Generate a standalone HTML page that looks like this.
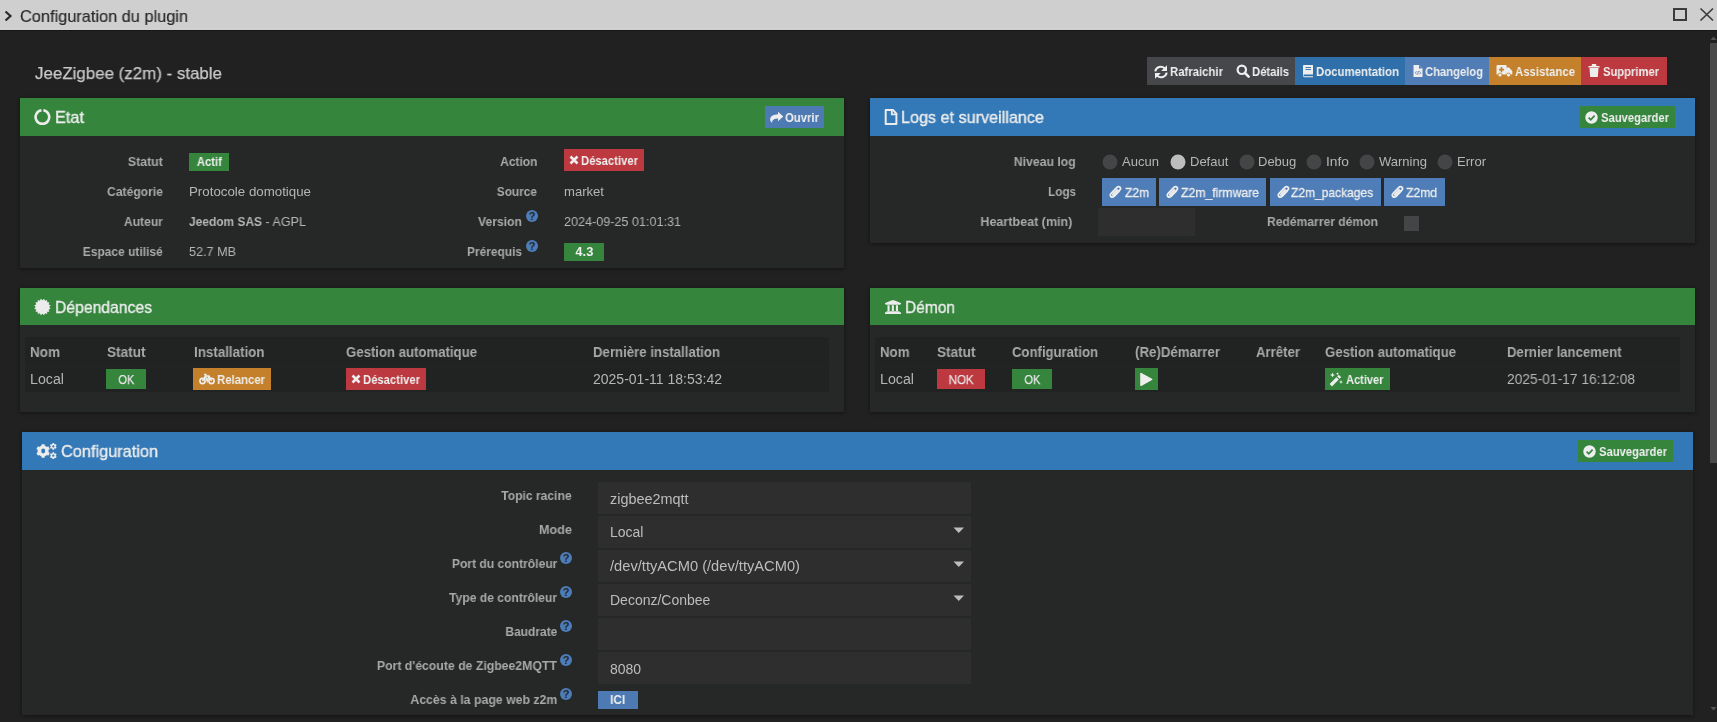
<!DOCTYPE html>
<html><head><meta charset="utf-8"><style>
html,body{margin:0;padding:0;width:1717px;height:722px;overflow:hidden;background:#202020;font-family:"Liberation Sans",sans-serif;}
body>div{position:absolute;}
.t{position:absolute;white-space:pre;will-change:transform;}
</style></head><body>
<div style="left:0px;top:0px;width:1717px;height:722px;background:#212121;"></div>
<div style="left:0px;top:0px;width:1717px;height:30px;background:#cfcfcf;"></div>
<div style="left:0px;top:30px;width:1717px;height:1px;background:#161616;"></div>
<svg style="position:absolute;left:3px;top:10px;" width="10" height="12" viewBox="0 0 10 12"><path d="M2.5 1.5 L7.5 6 L2.5 10.5" fill="none" stroke="#2a2a2a" stroke-width="2.2"/></svg>
<span class="t" style="left:19.60px;top:7.61px;font-size:17px;line-height:17px;color:#2b2b2b;transform:scaleX(0.9608);transform-origin:left center;-webkit-text-stroke:0.2px #2b2b2b;">Configuration du plugin</span>
<svg style="position:absolute;left:1672px;top:7px;" width="16" height="15" viewBox="0 0 16 15"><rect x="2" y="2" width="12" height="11" fill="none" stroke="#3c3c3c" stroke-width="2"/></svg>
<svg style="position:absolute;left:1699px;top:7px;" width="16" height="15" viewBox="0 0 16 15"><path d="M1.5 1.5 L14 13.5 M14 1.5 L1.5 13.5" fill="none" stroke="#3c3c3c" stroke-width="1.7"/></svg>
<div style="left:1710px;top:43px;width:7px;height:420px;background:#4a4a4a;"></div>
<svg style="position:absolute;left:1710px;top:35px;" width="7" height="6" viewBox="0 0 7 6"><path d="M0.5 5 L3.5 1.5 L6.5 5Z" fill="#555"/></svg>
<svg style="position:absolute;left:1710px;top:706px;" width="7" height="6" viewBox="0 0 7 6"><path d="M0.5 1 L3.5 4.5 L6.5 1Z" fill="#555"/></svg>
<span class="t" style="left:35.00px;top:64.61px;font-size:17px;line-height:17px;color:#c9c9c9;transform:scaleX(0.9945);transform-origin:left center;-webkit-text-stroke:0.25px #c9c9c9;">JeeZigbee (z2m) - stable</span>
<div style="left:1147px;top:57px;width:148px;height:28px;background:#45474a;"></div>
<div style="left:1295px;top:57px;width:110px;height:28px;background:#3070aa;"></div>
<div style="left:1405px;top:57px;width:84px;height:28px;background:#517db6;"></div>
<div style="left:1489px;top:57px;width:92px;height:28px;background:#c4802a;"></div>
<div style="left:1581px;top:57px;width:86px;height:28px;background:#bc393f;"></div>
<span class="t" style="left:1170.00px;top:65.00px;font-size:13px;line-height:13px;font-weight:700;color:#eeeeee;transform:scaleX(0.8731);transform-origin:left center;">Rafraichir</span>
<span class="t" style="left:1252.00px;top:65.00px;font-size:13px;line-height:13px;font-weight:700;color:#eeeeee;transform:scaleX(0.8677);transform-origin:left center;">Détails</span>
<span class="t" style="left:1316.00px;top:65.00px;font-size:13px;line-height:13px;font-weight:700;color:#eeeeee;transform:scaleX(0.8771);transform-origin:left center;">Documentation</span>
<span class="t" style="left:1425.00px;top:65.00px;font-size:13px;line-height:13px;font-weight:700;color:#eeeeee;transform:scaleX(0.8635);transform-origin:left center;">Changelog</span>
<span class="t" style="left:1515.00px;top:65.00px;font-size:13px;line-height:13px;font-weight:700;color:#eeeeee;transform:scaleX(0.8739);transform-origin:left center;">Assistance</span>
<span class="t" style="left:1603.00px;top:65.00px;font-size:13px;line-height:13px;font-weight:700;color:#eeeeee;transform:scaleX(0.8613);transform-origin:left center;">Supprimer</span>
<svg style="position:absolute;left:1154px;top:65px;" width="14" height="14" viewBox="0 0 14 14"><path d="M1.3 6.4 A5.6 5.6 0 0 1 10.6 3.3" fill="none" stroke="#eee" stroke-width="2.1"/><path d="M13 0.3 L13 6.1 L7.2 6.1Z" fill="#eee"/><path d="M12.7 7.6 A5.6 5.6 0 0 1 3.4 10.7" fill="none" stroke="#eee" stroke-width="2.1"/><path d="M1 13.7 L1 7.9 L6.8 7.9Z" fill="#eee"/></svg>
<svg style="position:absolute;left:1236px;top:64px;" width="14" height="14" viewBox="0 0 14 14"><circle cx="5.8" cy="5.8" r="4.2" fill="none" stroke="#eee" stroke-width="2.2"/><path d="M9 9 L12.6 12.6" stroke="#eee" stroke-width="2.6" stroke-linecap="round"/></svg>
<svg style="position:absolute;left:1302px;top:64px;" width="12" height="14" viewBox="0 0 12 14"><path d="M1 2 Q1 1 2 1 L11 1 L11 10.5 L2.5 10.5 Q1.5 10.5 1.5 11.5 Q1.5 12.3 2.5 12.3 L11 12.3 L11 13.2 L2.3 13.2 Q1 13.2 1 11.8Z" fill="#eee"/><path d="M3.5 3.5 H9 M3.5 5.5 H9" stroke="#3070aa" stroke-width="0.9"/></svg>
<svg style="position:absolute;left:1413px;top:64px;" width="10" height="14" viewBox="0 0 10 14"><path d="M0.5 1 L6 1 L9.5 4.5 L9.5 13 L0.5 13Z" fill="#eee"/><path d="M6 1 L6 4.5 L9.5 4.5" fill="#517db6"/><path d="M3.6 7.2 L2.4 8.8 L3.6 10.4 M6.4 7.2 L7.6 8.8 L6.4 10.4 M5.5 7 L4.5 10.6" fill="none" stroke="#517db6" stroke-width="0.8"/></svg>
<svg style="position:absolute;left:1496px;top:64px;" width="17" height="13" viewBox="0 0 17 13"><path d="M0.5 2 Q0.5 1 1.5 1 L10.5 1 L10.5 3.5 L13 3.5 L16.3 7 L16.3 10.5 L0.5 10.5Z" fill="#eee"/><circle cx="4" cy="11" r="2" fill="#eee" stroke="#c4802a" stroke-width="0.8"/><circle cx="12.5" cy="11" r="2" fill="#eee" stroke="#c4802a" stroke-width="0.8"/><path d="M5.5 3 V8.2 M2.9 5.6 H8.1" stroke="#c4802a" stroke-width="1.6"/></svg>
<svg style="position:absolute;left:1588px;top:63px;" width="12" height="15" viewBox="0 0 12 15"><path d="M0.5 3 L11.5 3 L11.5 4.5 L0.5 4.5Z M4 1 L8 1 L8.5 3 L3.5 3Z M1.5 5 L10.5 5 L9.8 14 L2.2 14Z" fill="#eee"/></svg>
<div style="left:20px;top:98px;width:824px;height:170px;background:#262828;box-shadow:0 1px 4px rgba(0,0,0,0.45);"></div>
<div style="left:20px;top:98px;width:824px;height:38px;background:#35853d;"></div>
<div style="left:870px;top:98px;width:825px;height:145px;background:#262828;box-shadow:0 1px 4px rgba(0,0,0,0.45);"></div>
<div style="left:870px;top:98px;width:825px;height:38px;background:#3479b7;"></div>
<div style="left:20px;top:288px;width:824px;height:124px;background:#262828;box-shadow:0 1px 4px rgba(0,0,0,0.45);"></div>
<div style="left:20px;top:288px;width:824px;height:37px;background:#35853d;"></div>
<div style="left:870px;top:288px;width:825px;height:124px;background:#262828;box-shadow:0 1px 4px rgba(0,0,0,0.45);"></div>
<div style="left:870px;top:288px;width:825px;height:37px;background:#35853d;"></div>
<div style="left:22px;top:432px;width:1671px;height:283px;background:#262828;box-shadow:0 1px 4px rgba(0,0,0,0.45);"></div>
<div style="left:22px;top:432px;width:1671px;height:38px;background:#3479b7;"></div>
<span class="t" style="left:55.00px;top:108.61px;font-size:17px;line-height:17px;color:#ececec;transform:scaleX(0.9587);transform-origin:left center;-webkit-text-stroke:0.35px #ececec;">Etat</span>
<span class="t" style="left:901.00px;top:108.61px;font-size:17px;line-height:17px;color:#ececec;transform:scaleX(0.9516);transform-origin:left center;-webkit-text-stroke:0.35px #ececec;">Logs et surveillance</span>
<span class="t" style="left:55.00px;top:298.61px;font-size:17px;line-height:17px;color:#ececec;transform:scaleX(0.9245);transform-origin:left center;-webkit-text-stroke:0.35px #ececec;">Dépendances</span>
<span class="t" style="left:905.00px;top:298.61px;font-size:17px;line-height:17px;color:#ececec;transform:scaleX(0.9122);transform-origin:left center;-webkit-text-stroke:0.35px #ececec;">Démon</span>
<span class="t" style="left:61.00px;top:442.61px;font-size:17px;line-height:17px;color:#ececec;transform:scaleX(0.9592);transform-origin:left center;-webkit-text-stroke:0.35px #ececec;">Configuration</span>
<svg style="position:absolute;left:34px;top:108px;" width="17" height="18" viewBox="0 0 17 18"><path d="M9.35 2.27 A6.8 6.8 0 1 1 7.45 2.27" fill="none" stroke="#ececec" stroke-width="2.6"/></svg>
<svg style="position:absolute;left:884px;top:109px;" width="14" height="16" viewBox="0 0 14 16"><path d="M1.7 1 L9 1 L12.4 4.6 L12.4 15 L1.7 15Z" fill="none" stroke="#ececec" stroke-width="2" stroke-linejoin="round"/><path d="M7.8 1.5 L7.8 5.3 L11.9 5.3" fill="none" stroke="#ececec" stroke-width="1.8"/></svg>
<svg style="position:absolute;left:34px;top:298px;" width="17" height="18" viewBox="0 0 17 18"><polygon points="10.09,0.76 11.01,2.81 13.12,2.02 13.19,4.26 15.43,4.33 14.64,6.44 16.69,7.36 15.15,9.00 16.69,10.64 14.64,11.56 15.43,13.67 13.19,13.74 13.12,15.98 11.01,15.19 10.09,17.24 8.45,15.70 6.81,17.24 5.89,15.19 3.78,15.98 3.71,13.74 1.47,13.67 2.26,11.56 0.21,10.64 1.75,9.00 0.21,7.36 2.26,6.44 1.47,4.33 3.71,4.26 3.78,2.02 5.89,2.81 6.81,0.76 8.45,2.30" fill="#ececec"/></svg>
<svg style="position:absolute;left:885px;top:300px;" width="16" height="14" viewBox="0 0 16 14"><path d="M0 3.5 Q0 3 0.8 2.7 L7 0.3 Q8 0 9 0.3 L15.2 2.7 Q16 3 16 3.5 L16 4 Q15.5 4.8 14.5 4.8 L1.5 4.8 Q0.5 4.8 0 4Z M1.5 11.2 H14.5 V12.3 H16 V14 H0 V12.3 H1.5Z M2.5 5.2 H4.6 V11 H2.5Z M6.8 5.2 H8.9 V11 H6.8Z M10.9 5.2 H13 V11 H10.9Z" fill="#ececec"/></svg>
<svg style="position:absolute;left:35px;top:443px;" width="23" height="17" viewBox="0 0 23 17"><polygon points="6.54,2.62 6.57,1.17 9.63,1.17 9.66,2.62 11.98,3.96 13.25,3.26 14.78,5.91 13.54,6.66 13.54,9.34 14.78,10.09 13.25,12.74 11.98,12.04 9.66,13.38 9.63,14.83 6.57,14.83 6.54,13.38 4.22,12.04 2.95,12.74 1.42,10.09 2.66,9.34 2.66,6.66 1.42,5.91 2.95,3.26 4.22,3.96" fill="#ececec"/><ellipse cx="8.2" cy="8" rx="2" ry="2.4" fill="#3479b7"/><polygon points="17.47,0.94 17.39,0.02 19.21,0.02 19.13,0.94 20.02,1.45 20.77,0.93 21.68,2.49 20.85,2.89 20.85,3.91 21.68,4.31 20.77,5.87 20.02,5.35 19.13,5.86 19.21,6.78 17.39,6.78 17.47,5.86 16.58,5.35 15.83,5.87 14.92,4.31 15.75,3.91 15.75,2.89 14.92,2.49 15.83,0.93 16.58,1.45" fill="#ececec"/><circle cx="18.3" cy="3.4" r="1.1" fill="#3479b7"/><polygon points="17.47,10.24 17.39,9.32 19.21,9.32 19.13,10.24 20.02,10.75 20.77,10.23 21.68,11.79 20.85,12.19 20.85,13.21 21.68,13.61 20.77,15.17 20.02,14.65 19.13,15.16 19.21,16.08 17.39,16.08 17.47,15.16 16.58,14.65 15.83,15.17 14.92,13.61 15.75,13.21 15.75,12.19 14.92,11.79 15.83,10.23 16.58,10.75" fill="#ececec"/><circle cx="18.3" cy="12.7" r="1.1" fill="#3479b7"/></svg>
<span class="t" style="left:126.16px;top:155.00px;font-size:13px;line-height:13px;font-weight:700;color:#a9a9a9;transform:scaleX(0.9500);transform-origin:right center;">Statut</span>
<span class="t" style="left:103.03px;top:185.00px;font-size:13px;line-height:13px;font-weight:700;color:#a9a9a9;transform:scaleX(0.9338);transform-origin:right center;">Catégorie</span>
<span class="t" style="left:121.11px;top:215.00px;font-size:13px;line-height:13px;font-weight:700;color:#a9a9a9;transform:scaleX(0.9310);transform-origin:right center;">Auteur</span>
<span class="t" style="left:76.28px;top:245.00px;font-size:13px;line-height:13px;font-weight:700;color:#a9a9a9;transform:scaleX(0.9225);transform-origin:right center;">Espace utilisé</span>
<div style="left:189px;top:153px;width:40px;height:18px;background:#35853d;"></div>
<span class="t" style="left:195.66px;top:155.84px;font-size:12px;line-height:12px;font-weight:700;color:#f0f0f0;transform:scaleX(0.9373);transform-origin:center center;">Actif</span>
<span class="t" style="left:189.00px;top:185.00px;font-size:13px;line-height:13px;color:#b5b5b5;transform:scaleX(1.0231);transform-origin:left center;">Protocole domotique</span>
<span class="t" style="left:189.00px;top:215.00px;font-size:13px;line-height:13px;font-weight:700;color:#b5b5b5;transform:scaleX(0.9184);transform-origin:left center;">Jeedom SAS</span>
<span class="t" style="left:262.00px;top:215.00px;font-size:13px;line-height:13px;color:#b5b5b5;transform:scaleX(0.9664);transform-origin:left center;"> - AGPL</span>
<span class="t" style="left:189.00px;top:245.00px;font-size:13px;line-height:13px;color:#b5b5b5;transform:scaleX(0.9706);transform-origin:left center;">52.7 MB</span>
<span class="t" style="left:496.55px;top:155.00px;font-size:13px;line-height:13px;font-weight:700;color:#a9a9a9;transform:scaleX(0.9221);transform-origin:right center;">Action</span>
<span class="t" style="left:492.92px;top:185.00px;font-size:13px;line-height:13px;font-weight:700;color:#a9a9a9;transform:scaleX(0.9143);transform-origin:right center;">Source</span>
<span class="t" style="left:475.03px;top:215.00px;font-size:13px;line-height:13px;font-weight:700;color:#a9a9a9;transform:scaleX(0.9368);transform-origin:right center;">Version</span>
<span class="t" style="left:462.02px;top:245.00px;font-size:13px;line-height:13px;font-weight:700;color:#a9a9a9;transform:scaleX(0.9169);transform-origin:right center;">Prérequis</span>
<svg style="position:absolute;left:526px;top:210px;" width="12" height="12" viewBox="0 0 12 12"><circle cx="6" cy="6" r="6" fill="#4d7db8"/><text x="6" y="10.2" text-anchor="middle" font-family="Liberation Sans" font-weight="700" font-size="11" fill="#262828">?</text></svg>
<svg style="position:absolute;left:526px;top:240px;" width="12" height="12" viewBox="0 0 12 12"><circle cx="6" cy="6" r="6" fill="#4d7db8"/><text x="6" y="10.2" text-anchor="middle" font-family="Liberation Sans" font-weight="700" font-size="11" fill="#262828">?</text></svg>
<div style="left:564px;top:149px;width:80px;height:22px;background:#bc393f;"></div>
<svg style="position:absolute;left:568px;top:154px;" width="12" height="12" viewBox="0 0 12 12"><path d="M2.5 2.5 L9.5 9.5 M9.5 2.5 L2.5 9.5" stroke="#eee" stroke-width="2.6"/></svg>
<span class="t" style="left:581.00px;top:154.20px;font-size:13px;line-height:13px;font-weight:700;color:#eeeeee;transform:scaleX(0.8665);transform-origin:left center;">Désactiver</span>
<span class="t" style="left:563.50px;top:185.00px;font-size:13px;line-height:13px;color:#b5b5b5;transform:scaleX(1.0067);transform-origin:left center;">market</span>
<span class="t" style="left:563.50px;top:215.00px;font-size:13px;line-height:13px;color:#b5b5b5;transform:scaleX(0.9692);transform-origin:left center;">2024-09-25 01:01:31</span>
<div style="left:564px;top:243px;width:40px;height:18px;background:#35853d;"></div>
<span class="t" style="left:575.66px;top:245.84px;font-size:12px;line-height:12px;font-weight:700;color:#f0f0f0;transform:scaleX(1.0787);transform-origin:center center;">4.3</span>
<div style="left:765px;top:106px;width:59px;height:22px;background:#4e7ab3;"></div>
<svg style="position:absolute;left:769px;top:110px;" width="15" height="14" viewBox="0 0 15 14"><path d="M9 1.8 L14.3 6.5 L9 11.2 L9 8.6 Q5 8.4 3.6 10.4 Q2.7 11.8 3.3 13 Q0.7 11.6 1.2 8.6 Q2 4.6 9 4.3Z" fill="#eee"/></svg>
<span class="t" style="left:785.00px;top:111.00px;font-size:13px;line-height:13px;font-weight:700;color:#eeeeee;transform:scaleX(0.8714);transform-origin:left center;">Ouvrir</span>
<span class="t" style="left:1010.25px;top:155.00px;font-size:13px;line-height:13px;font-weight:700;color:#a9a9a9;transform:scaleX(0.9430);transform-origin:right center;">Niveau log</span>
<span class="t" style="left:1044.94px;top:185.00px;font-size:13px;line-height:13px;font-weight:700;color:#a9a9a9;transform:scaleX(0.9014);transform-origin:right center;">Logs</span>
<span class="t" style="left:976.64px;top:215.00px;font-size:13px;line-height:13px;font-weight:700;color:#a9a9a9;transform:scaleX(0.9648);transform-origin:right center;">Heartbeat (min)</span>
<svg style="position:absolute;left:1101.5px;top:154px;" width="16" height="16" viewBox="0 0 16 16"><circle cx="8" cy="8" r="7.5" fill="#444546"/></svg>
<span class="t" style="left:1122.00px;top:155.00px;font-size:13px;line-height:13px;color:#b5b5b5;transform:scaleX(1.0034);transform-origin:left center;">Aucun</span>
<svg style="position:absolute;left:1169.5px;top:154px;" width="16" height="16" viewBox="0 0 16 16"><circle cx="8" cy="8" r="7.5" fill="#bdbdbd"/></svg>
<span class="t" style="left:1190.00px;top:155.00px;font-size:13px;line-height:13px;color:#b5b5b5;transform:scaleX(0.9918);transform-origin:left center;">Defaut</span>
<svg style="position:absolute;left:1238.5px;top:154px;" width="16" height="16" viewBox="0 0 16 16"><circle cx="8" cy="8" r="7.5" fill="#444546"/></svg>
<span class="t" style="left:1258.00px;top:155.00px;font-size:13px;line-height:13px;color:#b5b5b5;transform:scaleX(0.9918);transform-origin:left center;">Debug</span>
<svg style="position:absolute;left:1305.5px;top:154px;" width="16" height="16" viewBox="0 0 16 16"><circle cx="8" cy="8" r="7.5" fill="#444546"/></svg>
<span class="t" style="left:1326.00px;top:155.00px;font-size:13px;line-height:13px;color:#b5b5b5;transform:scaleX(1.0605);transform-origin:left center;">Info</span>
<svg style="position:absolute;left:1358.5px;top:154px;" width="16" height="16" viewBox="0 0 16 16"><circle cx="8" cy="8" r="7.5" fill="#444546"/></svg>
<span class="t" style="left:1379.00px;top:155.00px;font-size:13px;line-height:13px;color:#b5b5b5;">Warning</span>
<svg style="position:absolute;left:1436.5px;top:154px;" width="16" height="16" viewBox="0 0 16 16"><circle cx="8" cy="8" r="7.5" fill="#444546"/></svg>
<span class="t" style="left:1457.00px;top:155.00px;font-size:13px;line-height:13px;color:#b5b5b5;transform:scaleX(1.0038);transform-origin:left center;">Error</span>
<div style="left:1102px;top:178px;width:54px;height:28px;background:#4e7db7;"></div>
<svg style="position:absolute;left:1109px;top:185px;" width="13" height="14" viewBox="0 0 13 14"><path d="M10.6 5.6 L5.6 10.8 Q3.4 13 1.9 11.5 Q0.4 10 2.6 7.8 L7.9 2.4 Q9.5 0.8 10.9 2.2 Q12.3 3.6 10.7 5.2 L5.7 10.2 Q4.9 11 4.2 10.3 Q3.5 9.6 4.3 8.8 L8.8 4.3" fill="none" stroke="#eee" stroke-width="1.8"/></svg>
<span class="t" style="left:1125.00px;top:186.00px;font-size:13px;line-height:13px;color:#eeeeee;transform:scaleX(0.9231);transform-origin:left center;-webkit-text-stroke:0.3px #eeeeee;">Z2m</span>
<div style="left:1159px;top:178px;width:107px;height:28px;background:#4e7db7;"></div>
<svg style="position:absolute;left:1166px;top:185px;" width="13" height="14" viewBox="0 0 13 14"><path d="M10.6 5.6 L5.6 10.8 Q3.4 13 1.9 11.5 Q0.4 10 2.6 7.8 L7.9 2.4 Q9.5 0.8 10.9 2.2 Q12.3 3.6 10.7 5.2 L5.7 10.2 Q4.9 11 4.2 10.3 Q3.5 9.6 4.3 8.8 L8.8 4.3" fill="none" stroke="#eee" stroke-width="1.8"/></svg>
<span class="t" style="left:1181.00px;top:186.00px;font-size:13px;line-height:13px;color:#eeeeee;transform:scaleX(0.9389);transform-origin:left center;-webkit-text-stroke:0.3px #eeeeee;">Z2m_firmware</span>
<div style="left:1270px;top:178px;width:111px;height:28px;background:#4e7db7;"></div>
<svg style="position:absolute;left:1277px;top:185px;" width="13" height="14" viewBox="0 0 13 14"><path d="M10.6 5.6 L5.6 10.8 Q3.4 13 1.9 11.5 Q0.4 10 2.6 7.8 L7.9 2.4 Q9.5 0.8 10.9 2.2 Q12.3 3.6 10.7 5.2 L5.7 10.2 Q4.9 11 4.2 10.3 Q3.5 9.6 4.3 8.8 L8.8 4.3" fill="none" stroke="#eee" stroke-width="1.8"/></svg>
<span class="t" style="left:1291.00px;top:186.00px;font-size:13px;line-height:13px;color:#eeeeee;transform:scaleX(0.9225);transform-origin:left center;-webkit-text-stroke:0.3px #eeeeee;">Z2m_packages</span>
<div style="left:1384px;top:178px;width:61px;height:28px;background:#4e7db7;"></div>
<svg style="position:absolute;left:1391px;top:185px;" width="13" height="14" viewBox="0 0 13 14"><path d="M10.6 5.6 L5.6 10.8 Q3.4 13 1.9 11.5 Q0.4 10 2.6 7.8 L7.9 2.4 Q9.5 0.8 10.9 2.2 Q12.3 3.6 10.7 5.2 L5.7 10.2 Q4.9 11 4.2 10.3 Q3.5 9.6 4.3 8.8 L8.8 4.3" fill="none" stroke="#eee" stroke-width="1.8"/></svg>
<span class="t" style="left:1406.00px;top:186.00px;font-size:13px;line-height:13px;color:#eeeeee;transform:scaleX(0.9328);transform-origin:left center;-webkit-text-stroke:0.3px #eeeeee;">Z2md</span>
<div style="left:1098px;top:208px;width:97px;height:28px;background:#2e2e2e;"></div>
<span class="t" style="left:1267.00px;top:215.00px;font-size:13px;line-height:13px;font-weight:700;color:#a9a9a9;transform:scaleX(0.9311);transform-origin:left center;">Redémarrer démon</span>
<div style="left:1404px;top:216px;width:15px;height:15px;background:#444546;"></div>
<div style="left:25px;top:337px;width:804px;height:55px;background:#212222;"></div>
<div style="left:25px;top:366px;width:804px;height:1px;background:#242525;"></div>
<span class="t" style="left:30.00px;top:345.15px;font-size:14px;line-height:14px;font-weight:700;color:#a9a9a9;transform:scaleX(0.9639);transform-origin:left center;">Nom</span>
<span class="t" style="left:106.50px;top:345.15px;font-size:14px;line-height:14px;font-weight:700;color:#a9a9a9;transform:scaleX(0.9705);transform-origin:left center;">Statut</span>
<span class="t" style="left:193.50px;top:345.15px;font-size:14px;line-height:14px;font-weight:700;color:#a9a9a9;transform:scaleX(0.9539);transform-origin:left center;">Installation</span>
<span class="t" style="left:346.00px;top:345.15px;font-size:14px;line-height:14px;font-weight:700;color:#a9a9a9;transform:scaleX(0.9409);transform-origin:left center;">Gestion automatique</span>
<span class="t" style="left:592.50px;top:345.15px;font-size:14px;line-height:14px;font-weight:700;color:#a9a9a9;transform:scaleX(0.9436);transform-origin:left center;">Dernière installation</span>
<span class="t" style="left:30.00px;top:372.15px;font-size:14px;line-height:14px;color:#b5b5b5;transform:scaleX(1.0159);transform-origin:left center;">Local</span>
<div style="left:106px;top:369px;width:40px;height:20px;background:#35853d;"></div>
<span class="t" style="left:116.60px;top:373.20px;font-size:13px;line-height:13px;color:#e6e6e6;transform:scaleX(0.8512);transform-origin:center center;-webkit-text-stroke:0.25px #e6e6e6;">OK</span>
<div style="left:193px;top:368px;width:78px;height:22px;background:#c4802a;"></div>
<svg style="position:absolute;left:199px;top:373px;" width="16" height="12" viewBox="0 0 16 12"><circle cx="3.5" cy="8" r="2.6" fill="none" stroke="#eee" stroke-width="1.6"/><circle cx="12.5" cy="8" r="2.6" fill="none" stroke="#eee" stroke-width="1.6"/><path d="M3.5 8 L6.5 3 L10 3 L12.5 8 M6.5 3 L8.2 8 L10 3 M5 1.5 H7.5" fill="none" stroke="#eee" stroke-width="1.5"/></svg>
<span class="t" style="left:217.00px;top:373.00px;font-size:13px;line-height:13px;font-weight:700;color:#eeeeee;transform:scaleX(0.8740);transform-origin:left center;">Relancer</span>
<div style="left:346px;top:368px;width:80px;height:22px;background:#bc393f;"></div>
<svg style="position:absolute;left:350px;top:373px;" width="12" height="12" viewBox="0 0 12 12"><path d="M2.5 2.5 L9.5 9.5 M9.5 2.5 L2.5 9.5" stroke="#eee" stroke-width="2.6"/></svg>
<span class="t" style="left:363.00px;top:373.00px;font-size:13px;line-height:13px;font-weight:700;color:#eeeeee;transform:scaleX(0.8665);transform-origin:left center;">Désactiver</span>
<span class="t" style="left:592.50px;top:372.15px;font-size:14px;line-height:14px;color:#b5b5b5;transform:scaleX(0.9964);transform-origin:left center;">2025-01-11 18:53:42</span>
<div style="left:875px;top:337px;width:805px;height:55px;background:#212222;"></div>
<div style="left:875px;top:366px;width:805px;height:1px;background:#242525;"></div>
<span class="t" style="left:880.00px;top:345.15px;font-size:14px;line-height:14px;font-weight:700;color:#a9a9a9;transform:scaleX(0.9478);transform-origin:left center;">Nom</span>
<span class="t" style="left:937.00px;top:345.15px;font-size:14px;line-height:14px;font-weight:700;color:#a9a9a9;transform:scaleX(0.9679);transform-origin:left center;">Statut</span>
<span class="t" style="left:1011.70px;top:345.15px;font-size:14px;line-height:14px;font-weight:700;color:#a9a9a9;transform:scaleX(0.9372);transform-origin:left center;">Configuration</span>
<span class="t" style="left:1135.00px;top:345.15px;font-size:14px;line-height:14px;font-weight:700;color:#a9a9a9;transform:scaleX(0.9499);transform-origin:left center;">(Re)Démarrer</span>
<span class="t" style="left:1256.00px;top:345.15px;font-size:14px;line-height:14px;font-weight:700;color:#a9a9a9;transform:scaleX(0.9421);transform-origin:left center;">Arrêter</span>
<span class="t" style="left:1325.20px;top:345.15px;font-size:14px;line-height:14px;font-weight:700;color:#a9a9a9;transform:scaleX(0.9409);transform-origin:left center;">Gestion automatique</span>
<span class="t" style="left:1507.00px;top:345.15px;font-size:14px;line-height:14px;font-weight:700;color:#a9a9a9;transform:scaleX(0.9372);transform-origin:left center;">Dernier lancement</span>
<span class="t" style="left:880.00px;top:372.15px;font-size:14px;line-height:14px;color:#b5b5b5;transform:scaleX(1.0159);transform-origin:left center;">Local</span>
<div style="left:937px;top:369px;width:48px;height:20px;background:#bc393f;"></div>
<span class="t" style="left:946.91px;top:373.20px;font-size:13px;line-height:13px;color:#e6e6e6;transform:scaleX(0.8874);transform-origin:center center;-webkit-text-stroke:0.25px #e6e6e6;">NOK</span>
<div style="left:1012px;top:369px;width:40px;height:20px;background:#35853d;"></div>
<span class="t" style="left:1022.60px;top:373.20px;font-size:13px;line-height:13px;color:#e6e6e6;transform:scaleX(0.8512);transform-origin:center center;-webkit-text-stroke:0.25px #e6e6e6;">OK</span>
<div style="left:1135px;top:368px;width:23px;height:22px;background:#35853d;"></div>
<svg style="position:absolute;left:1139px;top:372px;" width="15" height="15" viewBox="0 0 15 15"><path d="M2 1.6 L12.6 7.4 L2 13.2Z" fill="#eee" stroke="#eee" stroke-width="1.6" stroke-linejoin="round"/></svg>
<div style="left:1325px;top:368px;width:65px;height:22px;background:#35853d;"></div>
<svg style="position:absolute;left:1329px;top:372px;" width="15" height="15" viewBox="0 0 15 15"><path d="M1.8 13.2 L8.6 6.4" stroke="#eee" stroke-width="3.4"/><path d="M9.4 5.6 L11 4" stroke="#eee" stroke-width="3.4"/><path d="M3.5 0.5 L4.2 2.3 L6 3 L4.2 3.7 L3.5 5.5 L2.8 3.7 L1 3 L2.8 2.3Z M12 8 L12.6 9.4 L14 10 L12.6 10.6 L12 12 L11.4 10.6 L10 10 L11.4 9.4Z M8.5 0.3 L9 1.3 L10 1.8 L9 2.3 L8.5 3.3 L8 2.3 L7 1.8 L8 1.3Z" fill="#eee"/></svg>
<span class="t" style="left:1346.00px;top:373.00px;font-size:13px;line-height:13px;font-weight:700;color:#eeeeee;transform:scaleX(0.8508);transform-origin:left center;">Activer</span>
<span class="t" style="left:1507.00px;top:372.15px;font-size:14px;line-height:14px;color:#b5b5b5;transform:scaleX(0.9846);transform-origin:left center;">2025-01-17 16:12:08</span>
<div style="left:1580px;top:106px;width:95px;height:22px;background:#35853d;"></div>
<svg style="position:absolute;left:1585px;top:111px;" width="13" height="13" viewBox="0 0 13 13"><circle cx="6.5" cy="6.5" r="6.2" fill="#eee"/><path d="M3.6 6.6 L5.8 8.8 L9.6 4.6" fill="none" stroke="#35853d" stroke-width="1.7"/></svg>
<span class="t" style="left:1601.00px;top:111.00px;font-size:13px;line-height:13px;font-weight:700;color:#eeeeee;transform:scaleX(0.8633);transform-origin:left center;">Sauvegarder</span>
<div style="left:1578px;top:440px;width:95px;height:22px;background:#35853d;"></div>
<svg style="position:absolute;left:1583px;top:445px;" width="13" height="13" viewBox="0 0 13 13"><circle cx="6.5" cy="6.5" r="6.2" fill="#eee"/><path d="M3.6 6.6 L5.8 8.8 L9.6 4.6" fill="none" stroke="#35853d" stroke-width="1.7"/></svg>
<span class="t" style="left:1599.00px;top:445.00px;font-size:13px;line-height:13px;font-weight:700;color:#eeeeee;transform:scaleX(0.8633);transform-origin:left center;">Sauvegarder</span>
<span class="t" style="left:496.38px;top:489.00px;font-size:13px;line-height:13px;font-weight:700;color:#a9a9a9;transform:scaleX(0.9309);transform-origin:right center;">Topic racine</span>
<div style="left:598px;top:482px;width:373px;height:32px;background:#2e2e2e;"></div>
<span class="t" style="left:609.80px;top:491.55px;font-size:14px;line-height:14px;color:#bdbdbd;transform:scaleX(1.0291);transform-origin:left center;">zigbee2mqtt</span>
<span class="t" style="left:538.05px;top:523.00px;font-size:13px;line-height:13px;font-weight:700;color:#a9a9a9;transform:scaleX(0.9719);transform-origin:right center;">Mode</span>
<div style="left:598px;top:516px;width:373px;height:32px;background:#2e2e2e;"></div>
<span class="t" style="left:609.80px;top:524.65px;font-size:14px;line-height:14px;color:#bdbdbd;">Local</span>
<svg style="position:absolute;left:953px;top:526.6px;" width="12" height="7" viewBox="0 0 12 7"><path d="M0.5 0.6 L11 0.6 L5.75 5.9Z" fill="#bdbdbd"/></svg>
<span class="t" style="left:443.61px;top:557.00px;font-size:13px;line-height:13px;font-weight:700;color:#a9a9a9;transform:scaleX(0.9304);transform-origin:right center;">Port du contrôleur</span>
<svg style="position:absolute;left:560px;top:552px;" width="12" height="12" viewBox="0 0 12 12"><circle cx="6" cy="6" r="6" fill="#4d7db8"/><text x="6" y="10.2" text-anchor="middle" font-family="Liberation Sans" font-weight="700" font-size="11" fill="#262828">?</text></svg>
<div style="left:598px;top:550px;width:373px;height:32px;background:#2e2e2e;"></div>
<span class="t" style="left:609.80px;top:558.65px;font-size:14px;line-height:14px;color:#bdbdbd;transform:scaleX(1.0481);transform-origin:left center;">/dev/ttyACM0 (/dev/ttyACM0)</span>
<svg style="position:absolute;left:953px;top:560.6px;" width="12" height="7" viewBox="0 0 12 7"><path d="M0.5 0.6 L11 0.6 L5.75 5.9Z" fill="#bdbdbd"/></svg>
<span class="t" style="left:440.94px;top:591.00px;font-size:13px;line-height:13px;font-weight:700;color:#a9a9a9;transform:scaleX(0.9305);transform-origin:right center;">Type de contrôleur</span>
<svg style="position:absolute;left:560px;top:586px;" width="12" height="12" viewBox="0 0 12 12"><circle cx="6" cy="6" r="6" fill="#4d7db8"/><text x="6" y="10.2" text-anchor="middle" font-family="Liberation Sans" font-weight="700" font-size="11" fill="#262828">?</text></svg>
<div style="left:598px;top:584px;width:373px;height:32px;background:#2e2e2e;"></div>
<span class="t" style="left:609.80px;top:592.65px;font-size:14px;line-height:14px;color:#bdbdbd;transform:scaleX(0.9960);transform-origin:left center;">Deconz/Conbee</span>
<svg style="position:absolute;left:953px;top:594.6px;" width="12" height="7" viewBox="0 0 12 7"><path d="M0.5 0.6 L11 0.6 L5.75 5.9Z" fill="#bdbdbd"/></svg>
<span class="t" style="left:500.64px;top:625.00px;font-size:13px;line-height:13px;font-weight:700;color:#a9a9a9;transform:scaleX(0.9227);transform-origin:right center;">Baudrate</span>
<svg style="position:absolute;left:560px;top:620px;" width="12" height="12" viewBox="0 0 12 12"><circle cx="6" cy="6" r="6" fill="#4d7db8"/><text x="6" y="10.2" text-anchor="middle" font-family="Liberation Sans" font-weight="700" font-size="11" fill="#262828">?</text></svg>
<div style="left:598px;top:618px;width:373px;height:32px;background:#2e2e2e;"></div>
<span class="t" style="left:366.11px;top:659.00px;font-size:13px;line-height:13px;font-weight:700;color:#a9a9a9;transform:scaleX(0.9429);transform-origin:right center;">Port d&#x27;écoute de Zigbee2MQTT</span>
<svg style="position:absolute;left:560px;top:654px;" width="12" height="12" viewBox="0 0 12 12"><circle cx="6" cy="6" r="6" fill="#4d7db8"/><text x="6" y="10.2" text-anchor="middle" font-family="Liberation Sans" font-weight="700" font-size="11" fill="#262828">?</text></svg>
<div style="left:598px;top:652px;width:373px;height:32px;background:#2e2e2e;"></div>
<span class="t" style="left:609.80px;top:661.55px;font-size:14px;line-height:14px;color:#bdbdbd;transform:scaleX(0.9950);transform-origin:left center;">8080</span>
<span class="t" style="left:401.64px;top:693.00px;font-size:13px;line-height:13px;font-weight:700;color:#a9a9a9;transform:scaleX(0.9462);transform-origin:right center;">Accès à la page web z2m</span>
<svg style="position:absolute;left:560px;top:688px;" width="12" height="12" viewBox="0 0 12 12"><circle cx="6" cy="6" r="6" fill="#4d7db8"/><text x="6" y="10.2" text-anchor="middle" font-family="Liberation Sans" font-weight="700" font-size="11" fill="#262828">?</text></svg>
<div style="left:598px;top:691px;width:40px;height:18px;background:#4e7ab3;"></div>
<span class="t" style="left:610.33px;top:694.34px;font-size:12px;line-height:12px;font-weight:700;color:#eeeeee;transform:scaleX(0.9776);transform-origin:center center;">ICI</span>
</body></html>
